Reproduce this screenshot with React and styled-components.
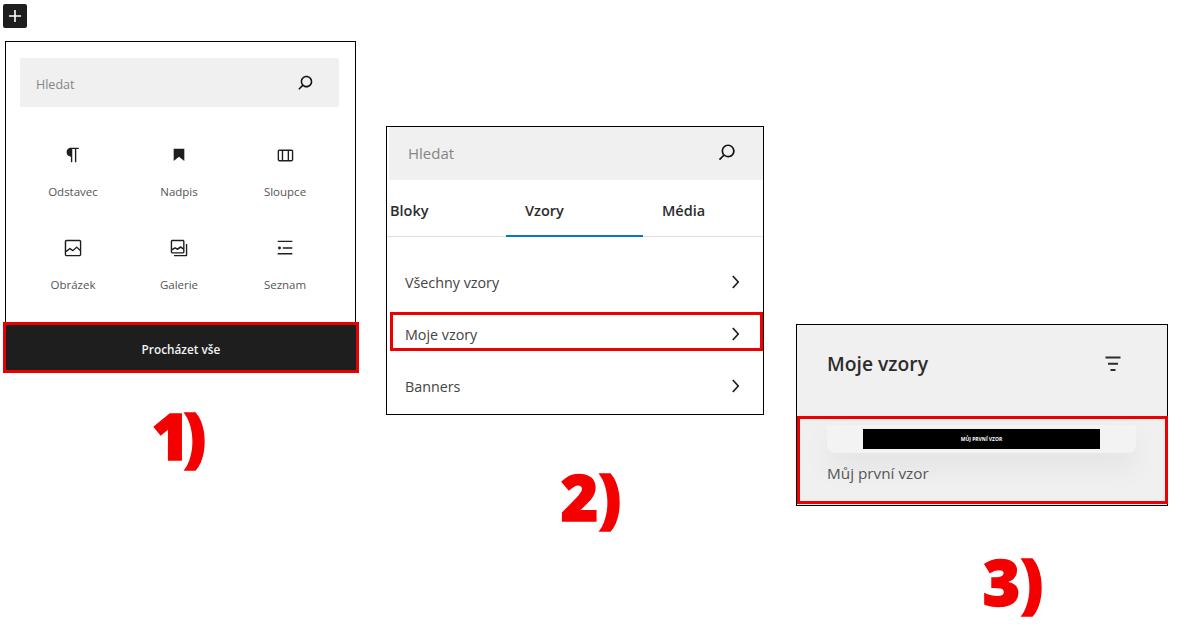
import React from 'react';
import styled, { createGlobalStyle } from 'styled-components';

const GlobalStyle = createGlobalStyle`
  html, body { margin: 0; padding: 0; background: #fff; }
  body { font-family: "Open Sans", "Noto Sans", "Liberation Sans", sans-serif; color: #1e1e1e; }
`;

const Page = styled.div`
  width: 1200px;
  height: 641px;
  overflow: hidden;
  display: flex;
  align-items: flex-start;
`;

const Column = styled.section`
  flex: none;
  width: ${p => p.$width}px;
  margin-left: ${p => p.$left}px;
  padding-top: ${p => p.$top}px;
`;

const AddButton = styled.div`
  width: 24px;
  height: 24px;
  margin: -37px 0 13px -2px;
  border-radius: 2px;
  background: #1e1e1e;
  color: #fff;
  display: flex;
  align-items: center;
  justify-content: center;
`;

const Panel = styled.div`
  box-sizing: border-box;
  height: ${p => p.$height}px;
  border: 1px solid #000;
  background: ${p => p.$bg || '#fff'};
  display: flex;
  flex-direction: column;
`;

const SearchBar = styled.div`
  box-sizing: border-box;
  height: ${p => p.$height}px;
  margin: ${p => p.$margin};
  padding: ${p => p.$padding};
  background: #f0f0f0;
  display: flex;
  align-items: center;
  justify-content: space-between;
  border-radius: 2px;
  font-size: ${p => p.$size}px;
  color: #858585;
  flex: none;
  svg {
    color: #111;
    transform: translateY(${p => p.$iconShift || 0}px);
  }
`;

const BlockGrid = styled.div`
  display: grid;
  grid-template-columns: repeat(3, 1fr);
  grid-auto-rows: 93px;
  padding: 26px 17px 0 14px;
  flex: 1;
`;

const BlockItem = styled.div`
  display: flex;
  flex-direction: column;
  align-items: center;
  color: #1e1e1e;
  padding-top: 11px;
  span {
    margin-top: 18px;
    font-size: 11.5px;
    line-height: 16px;
    color: #555;
  }
`;

const BrowseAll = styled.div`
  height: 45px;
  margin: 0 -1px 1px 0;
  padding-top: 2px;
  box-sizing: border-box;
  background: #1e1e1e;
  color: #f2f2f2;
  font-size: 11.8px;
  font-weight: 600;
  display: flex;
  align-items: center;
  justify-content: center;
  outline: 3px solid #e60000;
`;

const Tabs = styled.div`
  display: flex;
  height: 56px;
  border-bottom: 1px solid #ddd;
  flex: none;
`;

const Tab = styled.div`
  box-sizing: border-box;
  width: ${p => p.$width}px;
  padding-left: ${p => p.$pad}px;
  line-height: 62px;
  font-size: 14.5px;
  font-weight: 600;
  color: #2c2c2c;
  border-bottom: ${p => (p.$active ? '2px solid #007cba' : 'none')};
  height: ${p => (p.$active ? '57px' : 'auto')};
`;

const RowList = styled.div`
  padding: 23px 0 0 3px;
`;

const Row = styled.div`
  box-sizing: border-box;
  height: 39px;
  margin-bottom: 13px;
  padding: 5px 15px 0 15px;
  display: flex;
  align-items: center;
  justify-content: space-between;
  font-size: 14.3px;
  color: #444;
  border: ${p => (p.$marked ? '3px solid #ee0000' : 'none')};
  padding-left: ${p => (p.$marked ? 12 : 15)}px;
  padding-right: ${p => (p.$marked ? 12 : 15)}px;
  svg { color: #1e1e1e; }
`;

const PatternHead = styled.div`
  box-sizing: border-box;
  height: 91px;
  padding: 0 39px 14px 30px;
  display: flex;
  align-items: center;
  justify-content: space-between;
  font-size: 19.3px;
  font-weight: 600;
  color: #2c2c2c;
  flex: none;
`;

const PatternBox = styled.div`
  box-sizing: border-box;
  height: 88px;
  margin-right: -1px;
  padding: 6px 29px 0 27px;
  border: 3px solid #ee0000;
`;

const PatternCard = styled.div`
  height: 28px;
  padding-top: 4px;
  box-sizing: border-box;
  background: #f3f3f3;
  border-radius: 0 0 8px 8px;
  box-shadow: 0 14px 30px rgba(0, 0, 0, 0.06);
  display: flex;
  justify-content: center;
`;

const PatternThumb = styled.div`
  width: 237px;
  height: 20px;
  background: #000;
  color: #fff;
  font-size: 5px;
  font-weight: 700;
  line-height: 20px;
  text-align: center;
`;

const PatternName = styled.div`
  margin-top: 9px;
  font-size: 15.3px;
  line-height: 22px;
  color: #555;
`;

const StepNumber = styled.div`
  margin-top: ${p => p.$top}px;
  padding-left: ${p => p.$shift || 0}px;
  padding-right: ${p => p.$pull || 0}px;
  text-align: center;
  font-size: 64px;
  line-height: 64px;
  font-weight: 800;
  letter-spacing: ${p => p.$tight || 0}px;
  color: #f50000;
  -webkit-text-stroke: 1.5px #f50000;
`;

const Icon = ({ d, size = 24 }) => (
  <svg width={size} height={size} viewBox="0 0 24 24" fill="currentColor" fillRule="evenodd" aria-hidden="true">
    <path d={d} />
  </svg>
);

const paths = {
  plus: 'M18 11.2h-5.2V6h-1.6v5.2H6v1.6h5.2V18h1.6v-5.2H18z',
  search: 'M13 5c-3.3 0-6 2.7-6 6 0 1.4.5 2.7 1.3 3.7l-3.8 3.8 1.1 1.1 3.8-3.8c1 .8 2.3 1.3 3.7 1.3 3.3 0 6-2.7 6-6S16.3 5 13 5zm0 10.5c-2.5 0-4.5-2-4.5-4.5s2-4.5 4.5-4.5 4.5 2 4.5 4.5-2 4.5-4.5 4.5z',
  paragraph: 'M18.3 4H9.9v-.1l-.9.2c-2.3.4-4 2.4-4 4.8s1.7 4.4 4 4.8l.7.1V20h1.5V5.5h2.9V20h1.5V5.5h2.7V4z',
  bookmark: 'M6.2 5.2v13.4l5.8-4.8 5.8 4.8V5.2z',
  columns: 'M19 6H6c-1.1 0-2 .9-2 2v9c0 1.1.9 2 2 2h13c1.1 0 2-.9 2-2V8c0-1.1-.9-2-2-2zm-4.1 1.5v10H10v-10h4.9zM5.5 17V8c0-.3.2-.5.5-.5h2.5v10H6c-.3 0-.5-.2-.5-.5zm14 0c0 .3-.2.5-.5.5h-2.6v-10H19c.3 0 .5.2.5.5v9z',
  image: 'M19 3H5c-1.1 0-2 .9-2 2v14c0 1.1.9 2 2 2h14c1.1 0 2-.9 2-2V5c0-1.1-.9-2-2-2zM5 4.5h14c.3 0 .5.2.5.5v8.4l-3-2.9c-.3-.3-.8-.3-1 0L11.9 14 9 12c-.3-.2-.6-.2-.8 0l-3.6 2.6V5c-.1-.3.1-.5.4-.5zm14 15H5c-.3 0-.5-.2-.5-.5v-2.4l4.1-3 3 1.9c.3.2.7.2.9-.1L16 12l3.5 3.4V19c0 .3-.2.5-.5.5z',
  gallery: 'M4.6 3C3.7 3 3 3.7 3 4.6v11.8c0 .9.7 1.6 1.6 1.6h11.8c.9 0 1.6-.7 1.6-1.6V4.6C18 3.7 17.3 3 16.4 3H4.6zM4.5 4.6c0-.1 0-.1.1-.1h11.8c.1 0 .1 0 .1.1v7.3l-2.3-1.7a.8.8 0 0 0-.9 0l-2.9 2.1-2.4-1.1a.8.8 0 0 0-.7 0l-2.8 1.5V4.6zm0 11.8v-1.8l3.2-1.8 2.6 1.3c.3.1.6.1.8-.1l2.8-2 2.6 1.9v2.5c0 .1 0 .1-.1.1H4.6c-.1 0-.1 0-.1-.1zM21 7.5v12.3c0 .7-.6 1.2-1.3 1.2H6.5v-1.5h12.8c.1 0 .2-.1.2-.2V7.5H21z',
  list: 'M4 4h16v1.5H4zM9.5 11.2H20v1.5H9.5zM4 19h16v-1.5H4zM6 10.4a1.6 1.6 0 1 0 0 3.2 1.6 1.6 0 0 0 0-3.2z',
  chevron: 'M10.6 6L9.4 7l4.6 5-4.6 5 1.2 1 5.4-6z',
  filter: 'M10 17.5H14V16H10V17.5ZM6 6V7.5H18V6H6ZM8 12.5H16V11H8V12.5Z',
};

const blocks = [
  { label: 'Odstavec', icon: paths.paragraph },
  { label: 'Nadpis', icon: paths.bookmark },
  { label: 'Sloupce', icon: paths.columns },
  { label: 'Obrázek', icon: paths.image },
  { label: 'Galerie', icon: paths.gallery },
  { label: 'Seznam', icon: paths.list },
];

const rows = ['Všechny vzory', 'Moje vzory', 'Banners'];

export default function App() {
  return (
    <Page>
      <GlobalStyle />
      <Column $width={351} $left={5} $top={41}>
        <AddButton><Icon d={paths.plus} size={24} /></AddButton>
        <Panel $height={331}>
          <SearchBar $height={49} $margin="16px 16px 0 14px" $padding="3px 22px 0 16px" $size={12.5} $iconShift={-2}>
            Hledat
            <Icon d={paths.search} size={23} />
          </SearchBar>
          <BlockGrid>
            {blocks.map(b => (
              <BlockItem key={b.label}>
                <Icon d={b.icon} size={22} />
                <span>{b.label}</span>
              </BlockItem>
            ))}
          </BlockGrid>
          <BrowseAll>Procházet vše</BrowseAll>
        </Panel>
        <StepNumber $top={32} $pull={9} $tight={-6}>1)</StepNumber>
      </Column>

      <Column $width={378} $left={30} $top={126}>
        <Panel $height={289}>
          <SearchBar $height={53} $margin="0 0 0 2px" $padding="0 23px 2px 19px" $size={15} $iconShift={-1}>
            Hledat
            <Icon d={paths.search} size={26} />
          </SearchBar>
          <Tabs>
            <Tab $width={119} $pad={3}>Bloky</Tab>
            <Tab $width={137} $pad={19} $active>Vzory</Tab>
            <Tab $width={120} $pad={19}>Média</Tab>
          </Tabs>
          <RowList>
            {rows.map(r => (
              <Row key={r} $marked={r === 'Moje vzory'}>
                {r}
                <Icon d={paths.chevron} size={26} />
              </Row>
            ))}
          </RowList>
        </Panel>
        <StepNumber $top={50} $shift={32}>2)</StepNumber>
      </Column>

      <Column $width={372} $left={32} $top={324}>
        <Panel $height={182} $bg="#f0f0f0">
          <PatternHead>
            Moje vzory
            <Icon d={paths.filter} size={30} />
          </PatternHead>
          <PatternBox>
            <PatternCard><PatternThumb>MŮJ PRVNÍ VZOR</PatternThumb></PatternCard>
            <PatternName>Můj první vzor</PatternName>
          </PatternBox>
        </Panel>
        <StepNumber $top={44} $shift={62}>3)</StepNumber>
      </Column>
    </Page>
  );
}
